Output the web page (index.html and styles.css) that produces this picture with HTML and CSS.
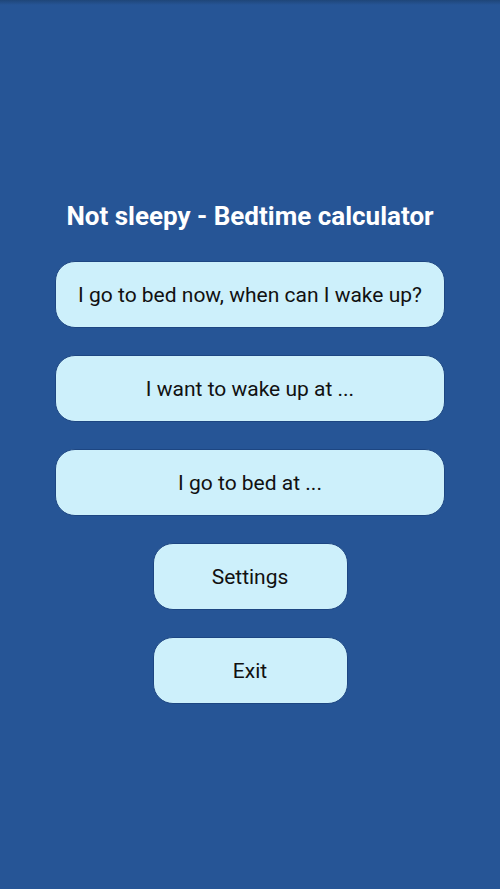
FILE: index.html
```html
<!DOCTYPE html>
<html lang="en">
<head>
    <meta charset="UTF-8">
    <meta name="viewport" content="width=device-width, initial-scale=1.0">
    <title>Not sleepy - Bedtime calculator</title>
    <link rel="stylesheet" href="styles.css">
</head>
<body>

    <div class="screen">
        <h1 class="app-title">Not sleepy - Bedtime calculator</h1>
        <div class="menu">
            <button class="menu-button wide">I go to bed now, when can I wake up?</button>
            <button class="menu-button wide">I want to wake up at ...</button>
            <button class="menu-button wide">I go to bed at ...</button>
            <button class="menu-button narrow">Settings</button>
            <button class="menu-button narrow">Exit</button>
        </div>
    </div>

</body>
</html>
```
FILE: styles.css
```css
body {
    margin: 0;
    font-family: Roboto, "Noto Sans", sans-serif;
    background-color: #265596;
}

/* Full screen with a little shadow under the status bar */
.screen {
    height: 889px;
    box-sizing: border-box;
    padding-top: 199px;
    background: linear-gradient(to bottom, #1f4679 0, #265596 5px);
    display: flex;
    flex-direction: column;
    align-items: center;
}

.app-title {
    margin: 0 0 28px 0;
    color: #ffffff;
    font-size: 26px;
    font-weight: bold;
    line-height: 34px;
    text-align: center;
}

.menu {
    display: flex;
    flex-direction: column;
    align-items: center;
    gap: 27px;
}

.menu-button {
    height: 67px;
    background-color: #cdf0fb;
    border: 1px solid #1d4682;
    border-radius: 20px;
    color: #111111;
    font-family: Roboto, "Noto Sans", sans-serif;
    font-size: 21px;
    padding: 0;
}

.menu-button.wide {
    width: 390px;
}

.menu-button.narrow {
    width: 195px;
}
```
